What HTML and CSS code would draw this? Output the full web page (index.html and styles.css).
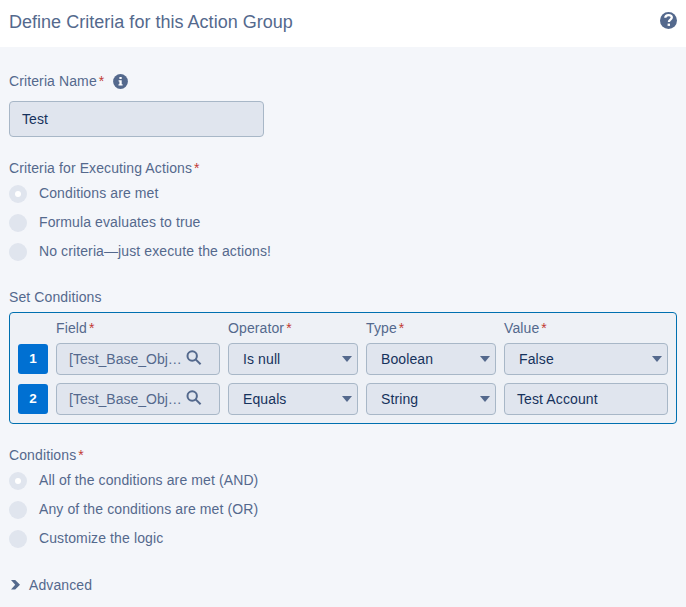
FILE: index.html
```html
<!DOCTYPE html>
<html lang="en">
<head>
<meta charset="utf-8">
<title>Define Criteria for this Action Group</title>
<link rel="stylesheet" href="styles.css">
</head>
<body>
<header class="header">
  <h1>Define Criteria for this Action Group</h1>
  <svg class="help" viewBox="0 0 17 17"><circle cx="8.5" cy="8.5" r="8.5" fill="#54698d"/><path d="M5.3 5.8C5.3 4 6.8 3.1 8.6 3.1c1.9 0 3.2.9 3.2 2.5 0 2-2.9 2-2.9 4.3" fill="none" stroke="#fff" stroke-width="2.3"/><path d="M7.6 11.6H10v2.3H7.6z" fill="#fff"/></svg>
</header>
<main class="content">
  <div class="label name-label"><span>Criteria Name</span><i class="req">*</i>
    <svg class="info" viewBox="0 0 15 15"><circle cx="7.5" cy="7.5" r="7.4" fill="#54698d"/><path d="M6.4 3.1h2.3v1.9H6.4zM5.6 6.2h3.1v4h.9v1.3H5.5v-1.3h.9V7.5h-.8z" fill="#fff"/></svg>
  </div>
  <div class="field name-field">Test</div>

  <div class="label">Criteria for Executing Actions<i class="req">*</i></div>
  <div class="radios">
    <div class="radio"><span class="dot checked"></span><span>Conditions are met</span></div>
    <div class="radio"><span class="dot"></span><span>Formula evaluates to true</span></div>
    <div class="radio"><span class="dot"></span><span>No criteria—just execute the actions!</span></div>
  </div>

  <div class="label">Set Conditions</div>
  <section class="conditions">
    <div class="heads">
      <span></span>
      <div class="label">Field<i class="req">*</i></div>
      <div class="label">Operator<i class="req">*</i></div>
      <div class="label">Type<i class="req">*</i></div>
      <div class="label">Value<i class="req">*</i></div>
    </div>
    <div class="row">
      <span class="num">1</span>
      <div class="field lookup"><span class="path">[Test_Base_Obj…</span><svg class="search" viewBox="0 0 16 16"><circle cx="6.2" cy="6" r="4.7"/><path d="M9.6 9.4l5 4.9"/></svg></div>
      <div class="field select">Is null<span class="caret"></span></div>
      <div class="field select">Boolean<span class="caret"></span></div>
      <div class="field select">False<span class="caret"></span></div>
    </div>
    <div class="row">
      <span class="num">2</span>
      <div class="field lookup"><span class="path">[Test_Base_Obj…</span><svg class="search" viewBox="0 0 16 16"><circle cx="6.2" cy="6" r="4.7"/><path d="M9.6 9.4l5 4.9"/></svg></div>
      <div class="field select">Equals<span class="caret"></span></div>
      <div class="field select">String<span class="caret"></span></div>
      <div class="field">Test Account</div>
    </div>
  </section>

  <div class="label">Conditions<i class="req">*</i></div>
  <div class="radios logic">
    <div class="radio"><span class="dot checked"></span><span>All of the conditions are met (AND)</span></div>
    <div class="radio"><span class="dot"></span><span>Any of the conditions are met (OR)</span></div>
    <div class="radio"><span class="dot"></span><span>Customize the logic</span></div>
  </div>

  <div class="advanced"><svg class="chevron" viewBox="0 0 9 10"><path d="M0 0h4.2L9 4.7 4.2 9.6H0l4.2-4.9z" fill="#54698d"/></svg><span>Advanced</span></div>
</main>
</body>
</html>
```
FILE: styles.css
```css
* { box-sizing: border-box; }
body {
  margin: 0;
  height: 607px;
  overflow: hidden;
  background: #f4f6fa;
  color: #54698d;
  font: 14px/20px "Liberation Sans", Arial, sans-serif;
  letter-spacing: 0.11px;
}
.header {
  display: flex;
  justify-content: space-between;
  height: 47px;
  padding: 12px 9px 0;
  background: #fff;
}
h1 { margin: 0; font-size: 18px; line-height: 20px; font-weight: 400; letter-spacing: 0.02px; }
.help { width: 17px; height: 17px; }
.content { padding: 24px 9px 0; }
.label { height: 20px; white-space: nowrap; }
.req { margin-left: 2px; color: #c23934; font-style: normal; }
.name-label { display: flex; }
.info { width: 15px; height: 15px; margin: 3px 0 0 9px; }
.field {
  display: flex;
  align-items: center;
  height: 32px;
  padding: 0 12px;
  border: 1px solid #a8b7c7;
  border-radius: 4px;
  background: #e0e5ee;
  color: #16325c;
  white-space: nowrap;
}
.name-field { width: 255px; height: 36px; margin: 10px 0 21px; }
.radios { margin: 5px 0 17px; }
.logic { margin-bottom: 18px; }
.radio { display: flex; gap: 12px; height: 29px; }
.dot {
  display: grid;
  place-items: center;
  width: 18px;
  height: 18px;
  margin-top: 2px;
  border-radius: 50%;
  background: #e0e5ee;
}
.checked::after { content: ""; width: 6px; height: 6px; border-radius: 50%; background: #fff; }
.conditions {
  width: 668px;
  height: 112px;
  margin: 5px 0 21px;
  padding: 5px 8px 0;
  border: 1px solid #0070b0;
  border-radius: 4px;
  background: #eef1f6;
}
.heads, .row {
  display: grid;
  grid-template-columns: 30px 164px 130px 130px 164px;
  column-gap: 8px;
}
.heads { margin-bottom: 5px; }
.row { margin-bottom: 8px; align-items: center; }
.num {
  height: 30px;
  border-radius: 3px;
  background: #0070d2;
  color: #fff;
  font-weight: 700;
  font-size: 13.5px;
  line-height: 30px;
  text-align: center;
}
.select { justify-content: space-between; padding: 0 5px 0 14px; }
.caret { border: 5px solid transparent; border-top: 6px solid #54698d; border-bottom: 0; }
.lookup { color: #54698d; letter-spacing: 0; }
.search { width: 16px; height: 16px; margin: -2px 0 0 4px; fill: none; stroke: #54698d; stroke-width: 2; }
.advanced { display: flex; }
.chevron { width: 9px; height: 10px; margin: 5px 9px 0 2px; }
```
